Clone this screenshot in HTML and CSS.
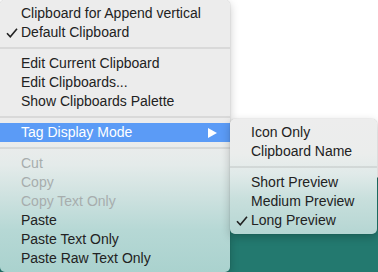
FILE: index.html
```html
<!DOCTYPE html>
<html>
<head>
<meta charset="utf-8">
<link rel="stylesheet" href="styles.css">
</head>
<body>
<div class="stage">
  <div class="menu main">
    <div class="item"><span class="chk"></span><span class="lbl">Clipboard for Append vertical</span></div>
    <div class="item"><span class="chk"><svg viewBox="0 0 12 10" width="12" height="10"><path d="M1 5.2 L4.3 8.8 L11 0.8" fill="none" stroke="#222" stroke-width="1.6"/></svg></span><span class="lbl">Default Clipboard</span></div>
    <div class="sep"></div>
    <div class="item"><span class="chk"></span><span class="lbl">Edit Current Clipboard</span></div>
    <div class="item"><span class="chk"></span><span class="lbl">Edit Clipboards...</span></div>
    <div class="item"><span class="chk"></span><span class="lbl">Show Clipboards Palette</span></div>
    <div class="sep"></div>
    <div class="item active"><span class="chk"></span><span class="lbl">Tag Display Mode</span><span class="arrow"><svg viewBox="0 0 9 10" width="9" height="10"><path d="M0 0 L9 5 L0 10 Z" fill="#fff"/></svg></span></div>
    <div class="sep"></div>
    <div class="item disabled"><span class="chk"></span><span class="lbl">Cut</span></div>
    <div class="item disabled"><span class="chk"></span><span class="lbl">Copy</span></div>
    <div class="item disabled"><span class="chk"></span><span class="lbl">Copy Text Only</span></div>
    <div class="item"><span class="chk"></span><span class="lbl">Paste</span></div>
    <div class="item"><span class="chk"></span><span class="lbl">Paste Text Only</span></div>
    <div class="item"><span class="chk"></span><span class="lbl">Paste Raw Text Only</span></div>
  </div>
  <div class="menu sub">
    <div class="item"><span class="chk"></span><span class="lbl">Icon Only</span></div>
    <div class="item"><span class="chk"></span><span class="lbl">Clipboard Name</span></div>
    <div class="sep"></div>
    <div class="item"><span class="chk"></span><span class="lbl">Short Preview</span></div>
    <div class="item"><span class="chk"></span><span class="lbl">Medium Preview</span></div>
    <div class="item"><span class="chk"><svg viewBox="0 0 12 10" width="12" height="10"><path d="M1 5.2 L4.3 8.8 L11 0.8" fill="none" stroke="#222" stroke-width="1.6"/></svg></span><span class="lbl">Long Preview</span></div>
  </div>
</div>
</body>
</html>
```
FILE: styles.css
```css
html, body {
  margin: 0;
  padding: 0;
}
body {
  width: 378px;
  height: 272px;
  overflow: hidden;
  background: linear-gradient(to bottom, #ffffff 0, #ffffff 177px, #1f6e66 178px, #23796f 186px, #23796f 100%);
  font-family: "Liberation Sans", Arial, sans-serif;
  font-size: 14px;
  color: #222;
}
.stage {
  position: relative;
  width: 378px;
  height: 272px;
}
.menu {
  display: flex;
  flex-direction: column;
  padding: 4px 0;
  border-radius: 5px;
  box-shadow: 0 0 1px rgba(0,0,0,0.35), 0 3px 10px rgba(0,0,0,0.22);
}
.main {
  width: 230px;
  height: 264px;
  background: linear-gradient(to bottom, #ececec 0, #ececec 140px, #e4ebea 165px, #cfe2e0 195px, #b6d8d5 230px, #aad2ce 272px);
}
.sub {
  position: absolute;
  left: 230px;
  top: 119px;
  width: 147px;
  background: linear-gradient(to bottom, #ededed 0, #ebedec 35px, #e0eae9 55px, #c8dfdc 80px, #b5d6d3 115px);
}
.item {
  display: flex;
  align-items: center;
  height: 19px;
  line-height: 19px;
  white-space: nowrap;
}
.chk {
  width: 21px;
  flex: none;
  display: flex;
  justify-content: flex-end;
  padding-right: 3px;
  box-sizing: border-box;
  align-items: center;
}
.chk svg {
  display: block;
}
.lbl {
  flex: 1;
}
.arrow {
  width: 22px;
  display: flex;
  align-items: center;
  flex: none;
}
.arrow svg {
  display: block;
}
.active {
  background: #5b9bf6;
  color: #fff;
}
.disabled {
  color: #a7adad;
}
.sep {
  height: 12px;
  display: flex;
  align-items: center;
}
.sep::before {
  content: "";
  display: block;
  width: 100%;
  height: 2px;
  background: rgba(0,0,0,0.08);
}
```
